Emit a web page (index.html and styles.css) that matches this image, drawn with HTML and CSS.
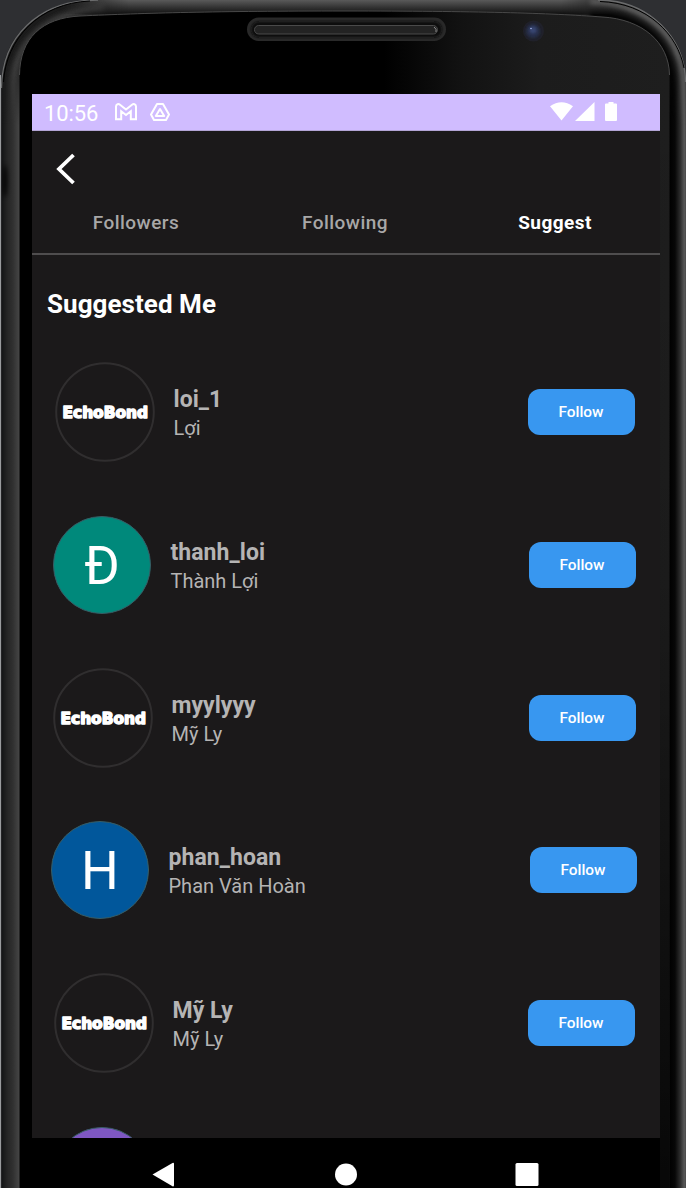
FILE: index.html
```html
<!DOCTYPE html>
<html lang="vi">
<head>
<meta charset="utf-8">
<title>Suggested Me</title>
<link rel="stylesheet" href="styles.css">
</head>
<body>
<div class="device">
  <svg class="frame" viewBox="0 0 686 1188" aria-hidden="true">
    <defs>
      <linearGradient id="left" x1="0" x2="1" y1="0" y2="0"><stop offset="0" stop-color="#141516"/><stop offset=".3" stop-color="#252525"/><stop offset=".6" stop-color="#303030"/><stop offset="1" stop-color="#484848"/></linearGradient>
      <linearGradient id="right" x1="0" x2="1" y1="0" y2="0"><stop offset="0" stop-color="#000"/><stop offset=".35" stop-color="#070707"/><stop offset=".65" stop-color="#2b2b2b"/><stop offset=".9" stop-color="#585858"/><stop offset="1" stop-color="#4a4a4a"/></linearGradient>
      <linearGradient id="top" x1="0" x2="0" y1="0" y2="1"><stop offset="0" stop-color="#5a5a5a"/><stop offset=".5" stop-color="#353535"/><stop offset="1" stop-color="#101010"/></linearGradient>
      <linearGradient id="glass" x1="0" x2="1" y1="0" y2="0"><stop offset=".56" stop-color="#000"/><stop offset=".68" stop-color="#121212"/><stop offset=".8" stop-color="#1c1c1c"/><stop offset="1" stop-color="#1e1e1e"/></linearGradient>
      <linearGradient id="shade" x1="0" x2="0" y1="0" y2="1"><stop offset="0" stop-color="#000" stop-opacity="0"/><stop offset=".45" stop-color="#000" stop-opacity=".1"/><stop offset="1" stop-color="#000" stop-opacity=".75"/></linearGradient>
      <linearGradient id="fadeY" gradientUnits="userSpaceOnUse" x1="0" y1="55" x2="0" y2="125"><stop offset="0" stop-color="#000"/><stop offset="1" stop-color="#fff"/></linearGradient>
      <linearGradient id="fadeX" gradientUnits="userSpaceOnUse" x1="60" y1="0" x2="630" y2="0"><stop offset="0" stop-color="#000"/><stop offset=".12" stop-color="#fff"/><stop offset=".88" stop-color="#fff"/><stop offset="1" stop-color="#000"/></linearGradient>
      <mask id="sides" maskUnits="userSpaceOnUse" x="0" y="0" width="686" height="1188"><path d="M0 0H686V1188H0Z" fill="url(#fadeY)"/></mask>
      <mask id="crown" maskUnits="userSpaceOnUse" x="0" y="0" width="686" height="60"><path d="M0 0H686V60H0Z" fill="url(#fadeX)"/></mask>
      <filter id="soft" filterUnits="userSpaceOnUse" x="-20" y="-20" width="726" height="300"><feGaussianBlur stdDeviation="2.2"/></filter>
      <filter id="dim" x="-50%" y="-50%" width="200%" height="200%"><feGaussianBlur stdDeviation="1.2"/></filter>
      <clipPath id="shell"><path d="M1.500 1188V82C2 38 37 0 98 0H598C649 0 686 38 686 78V1188Z"/></clipPath>
    </defs>
    <path d="M0 75V1188" stroke="#999b9d" stroke-width="2"/>
    <g clip-path="url(#shell)">
      <path d="M0 0H686V1188H0Z" fill="#1b1b1b"/>
      <path d="M13 130V85C14 45 44 12 104 8" fill="none" stroke="#3a3a3a" stroke-width="7" filter="url(#soft)"/>
      <path d="M590 2C650 3 683 38 683 85V130" fill="none" stroke="#606060" stroke-width="6" filter="url(#soft)"/>
      <path d="M590 14C640 16 672 38 672 90V130" fill="none" stroke="#000" stroke-width="6" filter="url(#soft)"/>
      <path d="M60 0H630V14H60Z" fill="url(#top)" mask="url(#crown)"/>
      <g mask="url(#sides)">
        <path d="M2 50H20V1188H2Z" fill="url(#left)"/>
        <path d="M669 50H686V1188H669Z" fill="url(#right)"/>
      </g>
      <ellipse cx="5" cy="181" rx="2.500" ry="16" fill="#000" filter="url(#soft)" opacity=".8"/>
    </g>
    <path d="M1.500 88C2 38 37 0 98 0M598 0C649 0 685 38 685.500 82" fill="none" stroke="#6b6c6d" stroke-width="1.300"/>
    <path d="M3.500 82C6 39 39 3 90 1M600 1.500C648 3 678 35 684 68" fill="none" stroke="#000"/>
    <path d="M19.500 1188V75C20 38 42 18 80 16C145 13 215 11 345 11S550 13 602 17C642 19 669 42 669.500 75V1188Z" fill="url(#glass)"/>
    <path d="M640 70H669.500V1188H640Z" fill="url(#shade)"/>
    <path d="M19.500 75C20 38 42 18 80 16C145 13 215 11 345 11S550 13 602 17C642 19 669 42 669.500 75" fill="none" stroke="#484848"/>
    <rect x="247" y="17.500" width="199" height="23.500" rx="11.700" fill="#292929"/>
    <rect x="251" y="21.500" width="191" height="16" rx="8" fill="#101010" filter="url(#dim)"/>
    <rect x="254.500" y="25.500" width="183" height="8.500" rx="4.200" fill="#232323" stroke="#4a4a4a"/>
    <path d="M434 27Q437 29 436 32" fill="none" stroke="#8b8b8b"/>
    <circle cx="533.500" cy="31" r="10.500" fill="#20212a"/><circle cx="533" cy="31" r="7" fill="#262d49" filter="url(#dim)"/><circle cx="533" cy="30" r="3.500" fill="#38456f" filter="url(#dim)"/><circle cx="531" cy="28.500" r=".8" fill="#a6b6ee"/>
  </svg>

  <div class="display">
    <header class="status">
      <span class="clock">10:56</span>
      <svg class="mail" viewBox="0 0 22 18"><path d="M1 16.200V3.500C1 1 3.600.6 5 1.700L11 6.500L17 1.700C18.500.6 21 1 21 3.500V16.200H15.800V8.200L11 12L6.200 8.200V16.200Z"/></svg>
      <svg class="drive" viewBox="0 0 20 18"><path d="M7 1H13L19 11.500L16 17H4L1 11.500ZM10 6L5.800 13H14.200Z"/></svg>
      <svg class="signals" viewBox="0 0 68 20"><path d="M0 4.200Q11.500-3.800 23 4.200L11.500 18.500ZM25 19L44.500 0V19ZM55 2.500Q55 1.500 56 1.500H58.500V0H63.500V1.500H66Q67 1.500 67 2.500V18Q67 19 66 19H56Q55 19 55 18Z"/></svg>
    </header>
    <main class="app">
      <div class="toolbar"><svg class="back" viewBox="0 0 20 32"><path d="M17.500 2L3 16L17.500 30"/></svg></div>
      <nav class="tabs"><span>Followers</span><span>Following</span><span class="active">Suggest</span></nav>
      <h1 class="title">Suggested Me</h1>
      <ul class="people">
        <li class="person r1"><svg class="avatar" viewBox="0 0 100 100"><circle class="ring" cx="50" cy="50" r="48.800"/><text class="brand" x="7.500" y="56" textLength="85.500" lengthAdjust="spacingAndGlyphs">EchoBond</text></svg><div class="names"><b>loi_1</b><span>Lợi</span></div><button class="follow">Follow</button></li>
        <li class="person r2"><div class="avatar letter green">Đ</div><div class="names"><b>thanh_loi</b><span>Thành Lợi</span></div><button class="follow">Follow</button></li>
        <li class="person r3"><svg class="avatar" viewBox="0 0 100 100"><circle class="ring" cx="50" cy="50" r="48.800"/><text class="brand" x="7.500" y="56" textLength="85.500" lengthAdjust="spacingAndGlyphs">EchoBond</text></svg><div class="names"><b>myylyyy</b><span>Mỹ Ly</span></div><button class="follow">Follow</button></li>
        <li class="person r4"><div class="avatar letter blue">H</div><div class="names"><b>phan_hoan</b><span>Phan Văn Hoàn</span></div><button class="follow">Follow</button></li>
        <li class="person r5"><svg class="avatar" viewBox="0 0 100 100"><circle class="ring" cx="50" cy="50" r="48.800"/><text class="brand" x="7.500" y="56" textLength="85.500" lengthAdjust="spacingAndGlyphs">EchoBond</text></svg><div class="names"><b>Mỹ Ly</b><span>Mỹ Ly</span></div><button class="follow">Follow</button></li>
        <li class="person r6"><div class="avatar letter purple"></div></li>
      </ul>
    </main>
    <footer class="navbar">
      <svg viewBox="0 0 628 50"><path d="M120.500 36.500L140.500 25Q142 24.200 142 26V47Q142 49 140.500 48.200Z"/><circle cx="314" cy="36.500" r="11"/><rect x="483.500" y="25" width="23" height="23" rx="1.500"/></svg>
    </footer>
  </div>
</div>
</body>
</html>
```

FILE: styles.css
```css
* { box-sizing: border-box; }
body { margin: 0; background: #2e2f32; font-family: Roboto, sans-serif; }
.device { position: relative; width: 686px; height: 1188px; overflow: hidden; padding: 94px 26px 0 32px; }
.frame { position: absolute; inset: 0; width: 686px; height: 1188px; }
.display { position: relative; display: flex; flex-direction: column; height: 1094px; }
.status { display: flex; align-items: center; height: 37px; padding-left: 12px; background: #d0bcff; border-bottom: 1px solid #b3a5d5; color: #fff; }
.clock { width: 71px; font-size: 22px; line-height: 36px; padding-top: 3px; letter-spacing: -.1px; }
.mail { width: 22px; height: 18px; fill: none; stroke: #fff; stroke-width: 2; }
.drive { width: 20px; height: 18px; margin-left: 13px; fill: none; stroke: #fff; stroke-width: 2; stroke-linejoin: round; }
.signals { width: 68px; height: 20px; margin-left: auto; margin-right: 42px; fill: #fff; }
.app { height: 1007px; overflow: hidden; background: #1b191a; }
.toolbar { height: 61px; padding: 22px 0 0 24px; }
.back { display: block; width: 20px; height: 32px; fill: none; stroke: #fff; stroke-width: 3.8; }
.tabs { display: grid; grid-template-columns: 208px 210px 210px; height: 63px; border-bottom: 2px solid #4f4d4e; color: #a8a7a7; font-size: 19px; font-weight: 500; letter-spacing: .45px; line-height: 61px; text-align: center; }
.active { color: #fff; font-weight: 700; }
.title { margin: 0; height: 81px; padding: 32px 0 0 15px; color: #fff; font-size: 26px; line-height: 34px; font-weight: 700; letter-spacing: .05px; }
.people { margin: 0; padding: 0; list-style: none; }
.person { display: flex; align-items: center; height: 152.7px; }
.avatar { flex: none; width: 100px; height: 100px; }
.ring { fill: none; stroke: #302e2f; stroke-width: 2; }
.brand { font: 700 15px "DejaVu Sans", sans-serif; fill: #fff; stroke: #fff; stroke-width: 1.5; stroke-linejoin: round; }
.letter { display: flex; align-items: center; justify-content: center; width: 98px; height: 98px; margin: 0 1px; padding-top: 2px; border-radius: 50%; border: 1px solid #385d65; color: #fff; font-size: 53px; }
.green { background: #00897b; }
.blue { background: #01579b; }
.purple { background: #7e57c2; }
.names { display: flex; flex-direction: column; width: 200px; margin-left: 18.5px; padding-top: 4px; color: #b5b4b4; white-space: nowrap; }
.names b { font-size: 23px; line-height: 29px; letter-spacing: .05px; }
.names span { font-size: 20px; line-height: 29px; }
.follow { width: 107px; height: 46px; margin-left: auto; padding: 0 1px 0 0; border: 0; border-radius: 12px; background: #3897f0; color: #fff; font: 500 15.4px Roboto, sans-serif; }
.r1 { padding: 0 25px 0 23px; }
.r2 { padding: 0 24px 0 20px; }
.r3 { padding: 0 24px 0 21px; }
.r4 { padding: 0 23px 0 18px; }
.r5 { padding: 0 25px 0 22px; }
.r6 { padding-left: 20px; }
.navbar { height: 50px; background: #000; }
.navbar svg { display: block; width: 628px; height: 50px; fill: #fff; }
```
